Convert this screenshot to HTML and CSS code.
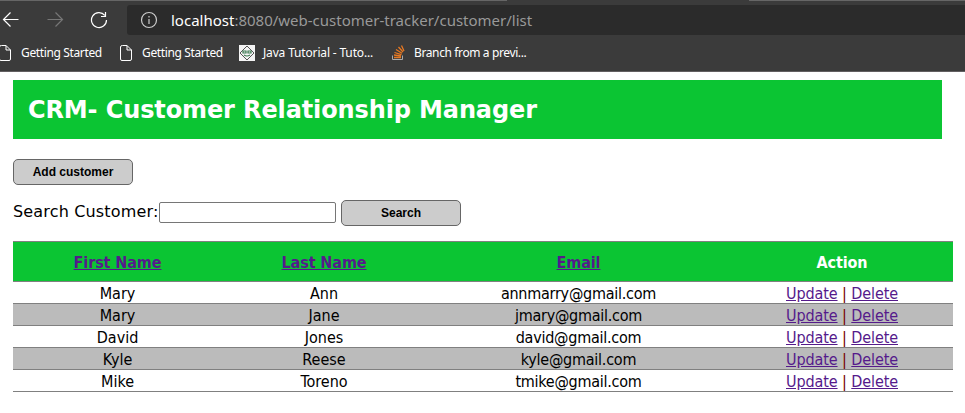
FILE: index.html
```html
<!DOCTYPE html>
<html lang="en">
<head>
<meta charset="utf-8">
<title>List Customers</title>
<link rel="stylesheet" href="styles.css">
</head>
<body>
<header class="browser">
  <div class="tab-edge"><span class="tab-left"></span><span class="tab-right"></span></div>
  <div class="toolbar">
    <svg class="nav back" width="18" height="18" viewBox="0 0 18 18"><path d="M17.500 8.500H2.500M9.500 1.500L2.500 8.500L9.500 15.500"/></svg>
    <svg class="nav forward" width="18" height="18" viewBox="0 0 18 18"><path d="M.5 8.500H15.500M8.500 1.500L15.500 8.500L8.500 15.500"/></svg>
    <svg class="nav reload" width="18" height="18" viewBox="0 0 18 18"><path d="M16.500 9A7.500 7.500 0 1 1 14.800 4.300M15.500 1V5.500H11"/></svg>
    <div class="address">
      <svg class="info" width="18" height="18" viewBox="0 0 18 18"><circle cx="9" cy="9" r="7.500"/><path d="M9 8V13M9 5V6.500"/></svg>
      <span class="url"><b class="host">localhost</b>:8080/web-customer-tracker/customer/list</span>
    </div>
  </div>
  <nav class="bookmarks">
    <span class="bookmark b1"><svg class="page" width="12" height="16" viewBox="0 0 12 16"><path d="M2.500.5H7L11.500 5V14Q11.500 15.500 10 15.500H2Q.5 15.500 .5 14V2Q.5 .5 2.500 .5M7 .5V5H11.500"/></svg><span class="label">Getting Started</span></span>
    <span class="bookmark b2"><svg class="page" width="12" height="16" viewBox="0 0 12 16"><path d="M2.500.5H7L11.500 5V14Q11.500 15.500 10 15.500H2Q.5 15.500 .5 14V2Q.5 .5 2.500 .5M7 .5V5H11.500"/></svg><span class="label">Getting Started</span></span>
    <span class="bookmark b3"><svg width="16" height="16" viewBox="0 0 16 16"><path fill="#f4f4f4" d="M0 0H16V16H0Z"/><path fill="none" stroke="#555" d="M8 1L15 8L8 15L1 8Z"/><path fill="none" stroke="#3c7a52" stroke-width="1.200" d="M4 6H7V8H4ZM9 6H12V8H9ZM5 10Q8 12 11 10"/></svg><span class="label">Java Tutorial - Tuto...</span></span>
    <span class="bookmark b4"><svg width="14" height="16" viewBox="0 0 14 16"><path fill="none" stroke="#aaa" d="M.5 10.500V14.500H10.500V10.500"/><path fill="none" stroke="#e87922" stroke-width="1.300" d="M2 12.500H9M2 10L9 11M2.500 7.500L9.500 9.700M4 4.500L10 8.200M6.500 2L11 7M9.500 .5L12 6"/></svg><span class="label">Branch from a previ...</span></span>
  </nav>
</header>
<main class="content">
  <div class="banner"><h2>CRM- Customer Relationship Manager</h2></div>
  <button class="button add" type="button">Add customer</button>
  <form class="search">
    <label for="q">Search Customer:</label><input id="q" type="text"><button class="button" type="button">Search</button>
  </form>
  <table>
    <colgroup><col class="first"><col class="last"><col class="email"><col class="action"></colgroup>
    <tr><th><a href="#">First Name</a></th><th><a href="#">Last Name</a></th><th><a href="#">Email</a></th><th>Action</th></tr>
    <tr><td>Mary</td><td>Ann</td><td>annmarry@gmail.com</td><td><a href="#">Update</a> <i>|</i> <a href="#">Delete</a></td></tr>
    <tr><td>Mary</td><td>Jane</td><td>jmary@gmail.com</td><td><a href="#">Update</a> <i>|</i> <a href="#">Delete</a></td></tr>
    <tr><td>David</td><td>Jones</td><td>david@gmail.com</td><td><a href="#">Update</a> <i>|</i> <a href="#">Delete</a></td></tr>
    <tr><td>Kyle</td><td>Reese</td><td>kyle@gmail.com</td><td><a href="#">Update</a> <i>|</i> <a href="#">Delete</a></td></tr>
    <tr><td>Mike</td><td>Toreno</td><td>tmike@gmail.com</td><td><a href="#">Update</a> <i>|</i> <a href="#">Delete</a></td></tr>
  </table>
</main>
</body>
</html>
```
FILE: styles.css
```css
* { box-sizing: border-box; }
body { margin: 0; background: #fff; color: #000; font-family: "DejaVu Sans", Verdana, sans-serif; overflow: hidden; }
svg { display: block; flex: none; }

.browser { height: 72px; background: #3b3b3b; border-bottom: 1px solid #625f61; font-family: "Noto Sans", sans-serif; overflow: hidden; }
.tab-edge { display: flex; justify-content: space-between; height: 1px; }
.tab-left { width: 507px; background: #666; }
.tab-right { width: 216px; background: #666; }
.toolbar { display: flex; align-items: center; height: 38px; }
.nav { fill: none; stroke: #fff; stroke-width: 1.2; }
.back { margin-left: 1px; }
.forward { margin-left: 28px; stroke: #777; }
.reload { margin-left: 25px; }
.address { display: flex; align-items: center; flex: 1; height: 30px; margin-left: 19px; padding-left: 13px; background: #2b2b2b; border-radius: 3px 0 0 3px; }
.info { fill: none; stroke: #ccc; stroke-width: 1.2; }
.url { margin-left: 13px; font-size: 15px; line-height: 30px; color: #999; white-space: nowrap; }
.host { font-weight: 400; color: #fff; }
.bookmarks { display: flex; align-items: center; height: 28px; }
.bookmark { display: flex; align-items: center; color: #fff; font-size: 12px; white-space: nowrap; }
.bookmark .label { line-height: 16px; margin-top: -1px; }
.page { fill: none; stroke: #fff; }
.b1 .label, .b2 .label { margin-left: 10px; width: 81px; letter-spacing: -0.36px; }
.b1 { margin-left: -1px; }
.b2 { margin-left: 18px; }
.b3 { margin-left: 16px; }
.b3 .label { margin-left: 8px; width: 111px; letter-spacing: -0.16px; }
.b4 { margin-left: 18px; }
.b4 .label { margin-left: 8px; letter-spacing: -0.38px; }

.content { padding: 8px 12px 0 13px; }
.banner { width: 929px; height: 59px; padding: 16px 15px 14px; background: #0bc533; color: #fff; }
.banner h2 { margin: 0; font-size: 24px; line-height: 29px; letter-spacing: -0.12px; white-space: nowrap; }
.button { display: block; width: 120px; height: 26px; padding: 0; border: 1px solid #666; border-radius: 5px; background: #ccc; color: #000; font: bold 12px "Liberation Sans", Arial, sans-serif; }
.add { margin-top: 20px; }
.search { display: flex; align-items: center; height: 26px; margin-top: 15px; }
.search label { width: 146px; font-size: 16px; line-height: 22px; letter-spacing: 0.16px; margin-top: -3px; white-space: nowrap; }
.search input { width: 177px; height: 21px; margin: 0 5px 1px 0; border: 1px solid #767676; border-radius: 2px; }

table { width: 940px; margin-top: 15px; table-layout: fixed; border-collapse: collapse; font: 16px "DejaVu Sans Condensed", "DejaVu Sans", Tahoma, sans-serif; }
.first { width: 209px; }
.last { width: 204px; }
.email { width: 305px; }
.action { width: 222px; }
th, td { border-top: 1px solid gray; border-bottom: 1px solid gray; }
th { height: 40px; padding: 3px 0 0; background: #0bc533; color: #fff; line-height: 20px; letter-spacing: -0.1px; }
td { height: 22px; padding: 3px 0 0; text-align: center; line-height: 18px; white-space: nowrap; }
td:nth-child(3) { letter-spacing: -0.25px; }
td:nth-child(4) { letter-spacing: -0.1px; }
tr:nth-child(odd) td { background: #bbb; }
a { color: #551a8b; text-decoration: underline; }
i { font-style: normal; color: #700; }
```
